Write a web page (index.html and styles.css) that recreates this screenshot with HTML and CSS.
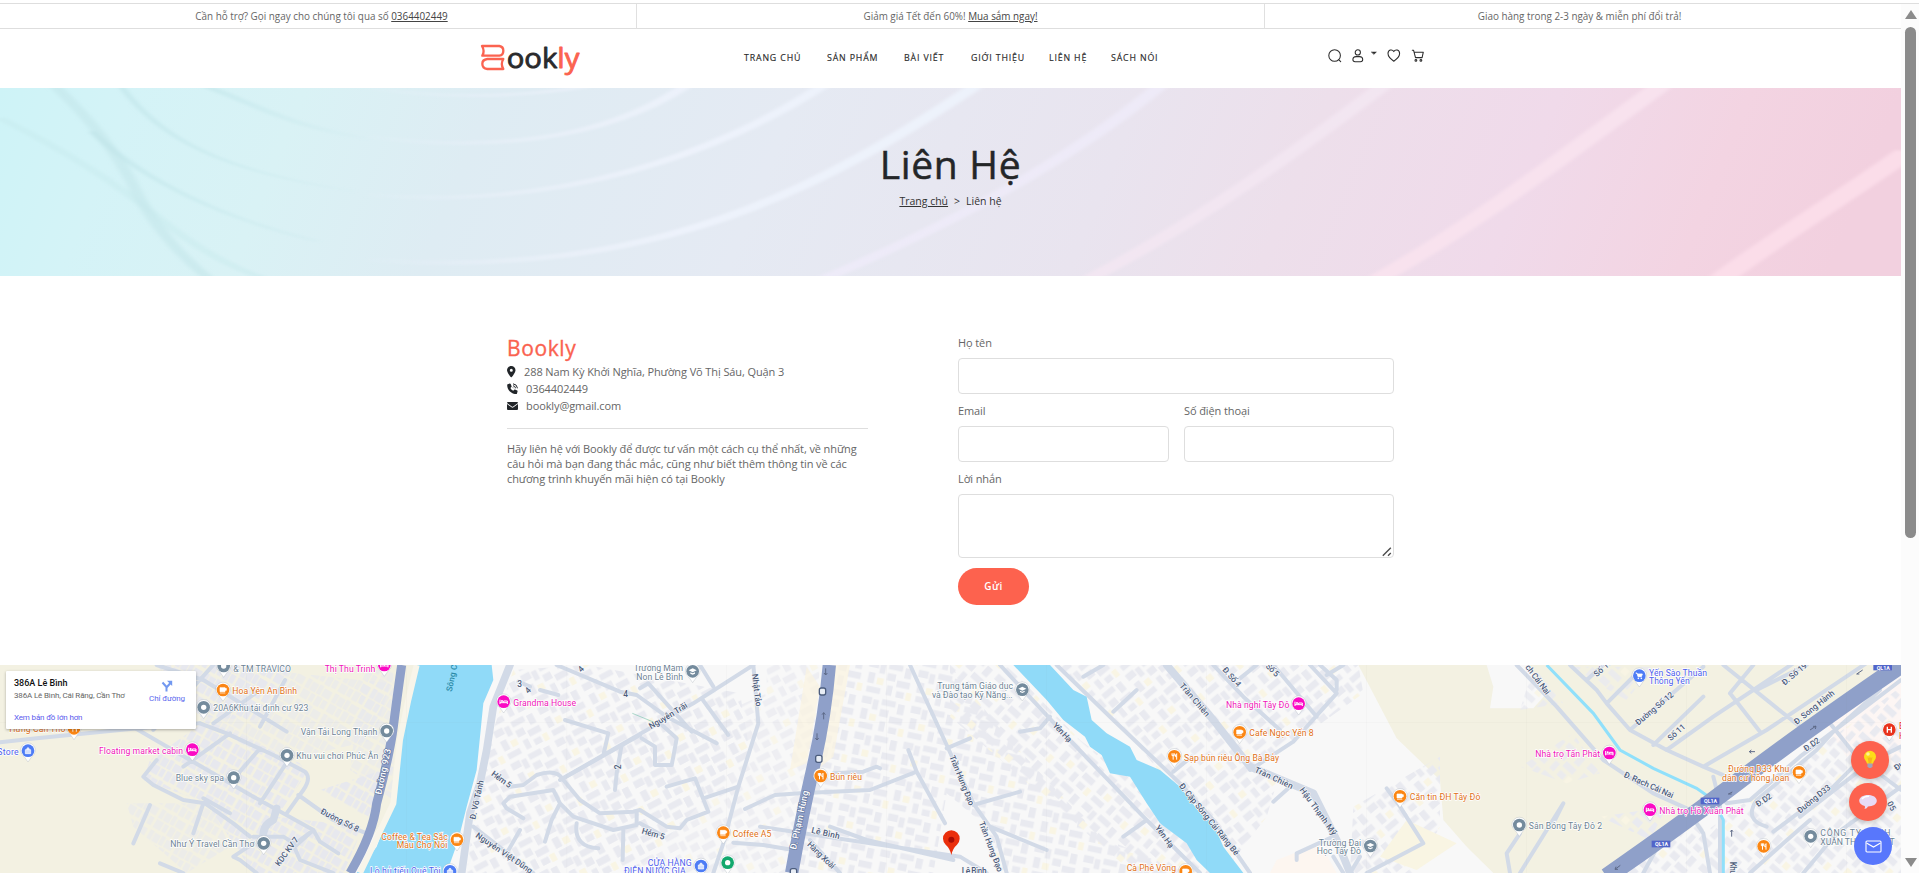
FILE: index.html
```html
<!DOCTYPE html>
<html lang="vi">
<head>
<meta charset="utf-8">
<title>Liên Hệ - Bookly</title>
<link rel="stylesheet" href="styles.css">
</head>
<body>
<div class="window">
<div class="page">
  <div class="topbar">
    <div class="topbar-cell"><span class="t1">Cần hỗ trợ? Gọi ngay cho chúng tôi qua số <a href="#">0364402449</a></span></div>
    <div class="topbar-cell"><span class="t2">Giảm giá Tết đến 60%! <a href="#">Mua sắm ngay!</a></span></div>
    <div class="topbar-cell"><span class="t3">Giao hàng trong 2-3 ngày &amp; miễn phí đổi trả!</span></div>
  </div>

  <header class="header">
    <svg class="logo" viewBox="0 0 306 96" width="102" height="32">
      <g fill="none" stroke="#fb6350" stroke-width="7" stroke-linejoin="round" stroke-linecap="round">
        <path d="M6 9H58Q70 11 70 23Q70 36 58 38H7Q15 24 6 9Z"/>
        <path d="M70 48H22Q7 50 7 62Q7 76 22 78H70Q61 63 70 48Z"/>
      </g>
      <text class="logo-text" x="80" y="76" textLength="218" lengthAdjust="spacingAndGlyphs">ook<tspan class="logo-accent">ly</tspan></text>
    </svg>
    <nav class="nav">
      <a class="n1">TRANG CHỦ</a><a class="n2">SẢN PHẨM</a><a class="n3">BÀI VIẾT</a><a class="n4">GIỚI THIỆU</a><a class="n5">LIÊN HỆ</a><a class="n6">SÁCH NÓI</a>
    </nav>
    <svg class="tools" viewBox="0 0 100 16" width="100" height="16" fill="none" stroke="#2b2b2b" stroke-width="1.05" stroke-linecap="round" stroke-linejoin="round">
      <circle cx="6.600" cy="7.500" r="5.800"/><path d="M10.900 11.800l1.800 1.800"/>
      <circle cx="29.800" cy="4.400" r="2.600"/><path d="M28.100 8.600h3.400c2 0 3.200 1.300 3.200 3 0 1.300-1 2.100-2.200 2.100h-5.400c-1.200 0-2.200-.8-2.200-2.100 0-1.700 1.200-3 3.200-3z"/>
      <path d="M43.600 4h4.800l-2.400 2.200z" fill="#2b2b2b" stroke-width=".5"/>
      <path d="M65.800 13.200c-4-2.600-5.800-5-5.800-7.600 0-3.800 4.200-4.900 5.800-2 1.600-2.900 5.800-1.800 5.800 2 0 2.600-1.800 5-5.800 7.600z"/>
      <path d="M84.300 2.300h1.300l1.900 7.300h6.600l1.200-5.400H86.300"/><circle cx="87.900" cy="12.400" r=".9"/><circle cx="92.900" cy="12.400" r=".9"/>
    </svg>
  </header>

  <section class="hero">
    <svg class="hero-art" viewBox="0 0 1554 564" preserveAspectRatio="none">
      <defs>
        <linearGradient id="sky" x1="0" y1="0" x2="1" y2="0.040">
          <stop offset="0" stop-color="#cef3f7"/><stop offset=".07" stop-color="#d4f3f7"/><stop offset=".16" stop-color="#d9f2f5"/>
          <stop offset=".26" stop-color="#deecf3"/><stop offset=".42" stop-color="#e5eaf3"/><stop offset=".6" stop-color="#e9e4ef"/>
          <stop offset=".7" stop-color="#eddfeb"/><stop offset=".82" stop-color="#f0daea"/><stop offset=".92" stop-color="#f3d4e2"/><stop offset="1" stop-color="#f2d0df"/>
        </linearGradient>
        <linearGradient id="fadeIn" gradientUnits="userSpaceOnUse" x1="290" y1="0" x2="560" y2="0">
          <stop offset="0" stop-color="#edf2fb" stop-opacity="0"/><stop offset="1" stop-color="#edf2fb"/>
        </linearGradient>
        <linearGradient id="fadeOut" gradientUnits="userSpaceOnUse" x1="60" y1="0" x2="310" y2="0">
          <stop offset="0" stop-color="#bfe4e8"/><stop offset="1" stop-color="#bfe4e8" stop-opacity="0"/>
        </linearGradient>
        <filter id="soft"><feGaussianBlur stdDeviation="2.200 3"/></filter>
      </defs>
      <rect width="1554" height="564" fill="url(#sky)"/>
      <g fill="none" filter="url(#soft)">
        <path d="M44 -10Q90 150 110 300T170 570" stroke="#c3e6ea" stroke-width="10" opacity=".55"/>
        <path d="M98 -10C130 150 180 250 290 310" stroke="url(#fadeOut)" stroke-width="5" opacity=".8"/>
        <path d="M0 90C60 200 100 300 130 390S190 540 215 570" stroke="#c6e9ec" stroke-width="9" opacity=".4"/>
        <path d="M75 130C120 290 190 400 260 460" stroke="url(#fadeOut)" stroke-width="6" opacity=".7"/>
        <path d="M165 -10C210 50 240 120 300 150" stroke="url(#fadeOut)" stroke-width="9" opacity=".9"/>
        <path d="M290 -5Q390 50 480 -5" stroke="url(#fadeIn)" stroke-width="9"/>
        <path d="M290 140Q370 185 440 150T560 -5" stroke="url(#fadeIn)" stroke-width="11"/>
        <path d="M300 320C460 370 590 190 672 -5" stroke="url(#fadeIn)" stroke-width="12"/>
        <path d="M300 515C540 580 680 280 797 -5" stroke="url(#fadeIn)" stroke-width="14"/>
        <path d="M675 570C790 390 880 200 948 -5" stroke="#eeebf8" stroke-width="14" opacity=".9"/>
        <path d="M892 570C980 400 1060 190 1130 -5" stroke="#f3e7f2" stroke-width="16" opacity=".9"/>
        <path d="M1128 570C1210 400 1280 200 1357 -5" stroke="#f8e2ee" stroke-width="20"/>
        <path d="M1408 570C1460 430 1510 320 1560 190" stroke="#fbdde9" stroke-width="23"/>
      </g>
    </svg>
    <div class="hero-copy">
      <h1>Liên Hệ</h1>
      <p class="crumbs"><a href="#">Trang chủ</a><span>&gt;</span><span>Liên hệ</span></p>
    </div>
  </section>

  <main class="contact">
    <section class="info">
      <h2>Bookly</h2>
      <ul>
        <li><svg width="9" height="12" viewBox="0 0 9 12"><path fill="#212529" fill-rule="evenodd" d="M4.300 0C6.700 0 8.500 1.800 8.500 4.200c0 2-2.800 5.800-3.700 6.900q-.5.5-1 0C2.900 10 0 6.200 0 4.200 0 1.800 1.900 0 4.300 0zm0 2.700a1.500 1.500 0 100 3 1.500 1.500 0 000-3z"/></svg><span class="i1">288 Nam Kỳ Khởi Nghĩa, Phường Võ Thị Sáu, Quận 3</span></li>
        <li><svg width="11" height="12" viewBox="0 0 11 12"><path fill="#212529" d="M.7 1.200L2.900.6q.6 0 .8.500l.9 2.100q.2.500-.2.900l-1 .8q.9 2 2.900 2.900l.8-1q.4-.4.9-.2l2.200.9q.5.300.4.800l-.6 2.200q-.2.500-.7.500C4.300 11 0 6.700.2 1.800q0-.5.5-.6z"/><path fill="none" stroke="#212529" d="M6 .8q4 .4 4.500 4.500M6 2.700q2.200.3 2.600 2.600M6 4.600l.6.600"/></svg><span class="i2">0364402449</span></li>
        <li><svg width="11" height="12" viewBox="0 0 11 12"><path fill="#212529" d="M1 2h9q1 0 1 1L6.200 6.500q-.7.500-1.400 0L0 3q0-1 1-1zM0 4l4.500 3.300q1 .7 2 0L11 4v5q0 1-1 1H1Q0 10 0 9z"/></svg><span class="i3">bookly@gmail.com</span></li>
      </ul>
      <hr>
      <p class="about"><span class="a1">Hãy liên hệ với Bookly để được tư vấn một cách cụ thể nhất, về những</span><br><span class="a2">câu hỏi mà bạn đang thắc mắc, cũng như biết thêm thông tin về các</span><br><span class="a3">chương trình khuyến mãi hiện có tại Bookly</span></p>
    </section>
    <form class="form">
      <label class="wide"><span>Họ tên</span><input type="text"></label>
      <label><span>Email</span><input type="text"></label>
      <label><span>Số điện thoại</span><input type="text"></label>
      <label class="wide"><span>Lời nhắn</span>
        <span class="area"><textarea></textarea><svg class="grip" width="10" height="10" viewBox="0 0 10 10"><path d="M.8 8.700L8.800.8M6 8.700l2.800-2.600" stroke="#4c4c4c" stroke-width="1.400"/></svg></span>
      </label>
      <button type="button">Gửi</button>
    </form>
  </main>

  <section class="map">
    <svg class="map-art" viewBox="0 15 5703 624" preserveAspectRatio="none">
      <defs>
        <pattern id="blocks" width="150" height="110" patternUnits="userSpaceOnUse">
          <g fill="#e9eaf0"><rect x="4" y="5" width="30" height="22"/><rect x="38" y="10" width="17" height="30"/><rect x="64" y="4" width="42" height="18"/><rect x="114" y="9" width="20" height="31"/><rect x="8" y="42" width="20" height="32"/><rect x="64" y="34" width="26" height="22"/><rect x="96" y="50" width="40" height="20"/><rect x="10" y="84" width="42" height="18"/><rect x="70" y="70" width="17" height="30"/><rect x="100" y="82" width="24" height="19"/></g>
          <rect x="36" y="54" width="20" height="20" fill="#f9f5e4"/><rect x="130" y="80" width="16" height="24" fill="#f9f5e4"/>
        </pattern>
        <pattern id="rows" width="92" height="70" patternUnits="userSpaceOnUse">
          <g fill="#e7e8ee"><rect x="2" y="3" width="14" height="30"/><rect x="19" y="5" width="20" height="28"/><rect x="42" y="2" width="13" height="30"/><rect x="59" y="6" width="26" height="25"/><rect x="3" y="37" width="24" height="28"/><rect x="31" y="38" width="14" height="25"/><rect x="50" y="36" width="18" height="30"/><rect x="72" y="38" width="15" height="26"/></g>
        </pattern>
        <pattern id="blocksA" href="#blocks" patternTransform="rotate(-28)"/>
        <pattern id="blocksB" href="#blocks" patternTransform="rotate(42)"/>
        <pattern id="blocksC" href="#blocks" patternTransform="rotate(12)"/>
        <pattern id="blocksD" href="#blocks" patternTransform="rotate(-40)"/>
        <pattern id="rowsA" href="#rows" patternTransform="rotate(30)"/>
        <g id="pin"><path d="M0 34L-12 17A22 22 0 1 1 12 17Z" fill="#fff" stroke="#9aa3ad" stroke-width="1.500" stroke-opacity=".6"/><circle r="19" fill="currentColor"/></g>
        <g id="p-dot"><use href="#pin"/><circle r="8" fill="#fff"/></g>
        <g id="p-cup"><use href="#pin"/><path d="M-9 -7H6V5H-9ZM6 -5h4v6H6M-9 9H7" fill="#fff" stroke="#fff" stroke-width="2"/></g>
        <g id="p-food"><use href="#pin"/><path d="M-7 -9v7h7v-7M-3.500 -9V10M7 10V-8q-4 2-4 9h4" fill="none" stroke="#fff" stroke-width="3"/></g>
        <g id="p-bed"><use href="#pin"/><path d="M-11 -6V7M-11 3H11V7M11 3V-2H0V3" fill="none" stroke="#fff" stroke-width="3"/><circle cx="-5" cy="-2" r="3" fill="#fff"/></g>
        <g id="p-bag"><use href="#pin"/><path d="M-8 -3H8V9H-8ZM-4 -3Q-4 -9 0 -9T4 -3" fill="#fff" fill-opacity=".75" stroke="#fff" stroke-width="2"/></g>
        <g id="p-cart"><use href="#pin"/><path d="M-11 -8h4l3 11h10l3-8H-6" fill="#fff" stroke="#fff" stroke-width="2.500"/><circle cx="-3" cy="8" r="2.500" fill="#fff"/><circle cx="6" cy="8" r="2.500" fill="#fff"/></g>
        <g id="p-edu"><use href="#pin"/><path d="M-12 -3L0 -9 12 -3 0 3ZM-7 3V7L0 10 7 7V3L0 6Z" fill="#fff"/></g>
      </defs>

      <!-- land -->
      <rect y="15" width="5703" height="624" fill="#f8f8f8"/>
      <path d="M0 15H1300L1200 400 1050 639H0Z" fill="#f3f1e2"/>
      <path d="M4075 15L4190 235 4320 360 4330 480 4400 560 4480 639H4860L5140 430 5703 15Z" fill="#f3f1e2"/>
      <path d="M4460 15H4580L4640 100 4600 145 4470 145 4480 80ZM4320 520L4400 560 4460 639H4320Z" fill="#f8f8f8"/>
      <path d="M5160 440L5703 30V639H4900Q5160 560 5160 440Z" fill="#f8f8f8"/>
      <path d="M5480 200L5703 50V330L5610 260 5540 290Z" fill="#fdf6f4"/>

      <!-- building blocks -->
      <path d="M470 15H880L760 180 600 170Z" fill="url(#rowsA)"/>
      <path d="M450 300L620 180 900 310 920 340 830 470 1090 500 1030 639H760L620 430 430 360ZM960 390L1180 320 1110 480Z" fill="url(#rowsA)"/>
      <path d="M600 180L700 20 1170 70 1120 240 860 300Z" fill="url(#rowsA)" opacity=".6"/>
      <path d="M1090 30H1180V420L1050 330Z" fill="url(#rowsA)" opacity=".6"/>
      <path d="M380 430L630 430 690 560 560 639 400 500Z" fill="url(#rowsA)" opacity=".55"/>
      <path d="M1540 30L1760 15 2220 100 2250 280 1900 639H1400L1440 330Z" fill="url(#blocksA)"/>
      <path d="M1850 300L2300 100V15H2460L2430 400 2370 639H1560Z" fill="url(#blocksA)" opacity=".7"/>
      <path d="M2500 15H2850L3010 220 3300 530 3560 639H3000L2960 500 2840 400 2800 639H2390L2440 340Z" fill="url(#blocksC)"/>
      <path d="M3020 15L3240 240 3550 480 3640 639H3400L2850 170V15Z" fill="url(#blocksB)"/>
      <path d="M3170 15H4075L4090 100 3880 250 3720 340 3550 420 3350 180Z" fill="url(#blocksD)"/>
      <path d="M3540 370L3740 310 3830 370 3800 470 3700 600ZM4060 440L4320 290V500L4240 639H4050Z" fill="url(#blocksD)"/>
      <path d="M4560 320L4720 220 4800 340 4700 370ZM4600 20L4690 130 4560 150ZM4700 20H4960L4880 120Z" fill="url(#blocksB)" opacity=".8"/>
      <path d="M5150 490L5703 80V639H4960ZM4850 639L5080 450 5180 639Z" fill="url(#blocksB)"/>
      <path d="M4800 470L5000 440 4950 540Z" fill="url(#blocksB)"/>
      <path d="M2420 20L2460 80 2420 310 2370 330ZM2500 15H2550L2500 290 2450 330Z" fill="#fbf4df" opacity=".7"/>
      <path d="M4220 480L4370 550 4250 630 4140 590Z" fill="#f9f5e3"/>
      <path d="M3830 600L3960 550 4010 639H3810Z" fill="#fdf6f0"/>

      <!-- minor streets -->
      <g class="road">
        <path d="M0 247L110 235 390 207 600 190"/>
        <path d="M470 15L610 60 860 215M380 190L760 410 940 510 960 545 1015 580M600 190L680 220 820 285 915 335Q935 355 910 390L860 460M690 220L550 320M780 265L715 340M865 300L780 430M470 300L430 350 460 375 550 420 615 430 700 490 750 530M460 210L590 70 640 15M640 190L780 90M780 200L855 60M450 435L400 550M610 430L580 520M690 460L610 415M895 405L1000 480 1100 520M940 510L880 555 900 600 1000 639M760 530L850 530 890 555 940 510M760 550L700 590 720 600 770 639M480 610L550 639"/>
        <path class="lane" d="M830 445L820 480Q785 495 790 540"/>
        <path class="lane" d="M1530 15L1480 140 1460 270 1440 370 1410 460M1410 460L1385 639"/>
        <path d="M1670 15L1860 95 1910 105 2000 170 2150 250M1555 65L1590 80M1620 90L1675 105M1920 85L1945 70 2075 215M1695 180L1825 220 1810 285M2260 15L2080 130 1680 360M2100 15L2140 80M2105 115L2185 225M1865 255L1850 340 1845 390M1980 190L2030 235 2020 290 2015 315 1965 315 1965 260 1925 235"/>
        <path d="M1920 225L1690 355M1530 380L1570 375 1610 345Q1670 325 1690 360L1740 420 1800 460 1900 455 1920 450 2000 500 2040 505 2060 480 2125 455 2085 355 2000 380M2110 415L2215 380M1570 475L1520 445 1510 430 1530 410 1660 390 1680 430 1720 470 1840 510 1910 495 1910 455M1680 430L1655 480 1635 545M1730 490Q1720 560 1795 565M1870 510L1868 600M1920 490L1985 525M1560 510L1520 580"/>
        <path d="M2260 15L2275 190 2215 380 2170 550 2140 639M2235 447L2325 405 2400 400 2610 390 2750 335 2725 270M2500 340L2590 335 2630 320 2640 325M2750 335L2835 490M2730 15L2840 255 2920 430 2990 530 3020 639M2840 265L2910 235M2200 548L2290 555 2380 570M2920 435L3060 395M2970 500L3140 570"/>
        <path d="M3000 15L3200 230 3430 470 3560 600 3600 639M3170 15L3340 180 3540 370 3640 480 3750 639M3250 50L3310 15M3340 155L3410 90M3060 215L3120 205 3150 170M3370 530L3440 480M3520 335L3575 290"/>
        <path class="lane" d="M3500 15L3640 180 3750 320"/>
        <path class="lane" d="M3750 320L3940 400 4010 540 4050 639"/>
        <path d="M3640 15L3730 110 3840 210M3820 15L3950 170M3720 55L3770 15M3930 15L4010 100 3880 245 3750 330M3980 45L4030 15M4010 90L4010 60 3960 15M3820 425L3870 380M4160 385L4200 440 4270 550 4100 639M3890 600L3890 580 4000 530M4000 590L4030 639M4080 590L4050 639"/>
        <path d="M4550 15L4670 140 4740 220 4810 300 4960 400 5060 445 5110 520 5130 639M4710 15L4790 90 4820 130 4890 210 5000 270 5110 320 5180 350M4820 130L4920 30M4760 60L4810 15M4890 210L5110 20M5000 270L5140 170 5380 10M4960 255L5110 110M5190 100L5280 215M5110 320L5300 210 5703 -60M5170 15L5400 200M5270 90L5420 15M5190 100L5260 15"/>
        <path d="M5140 350L5150 390 5180 430 5250 420 5400 290 5703 60M5300 500Q5230 480 5270 420L5450 270 5500 215 5640 90M5320 515L5500 380 5560 320M5400 470L5620 300 5703 260M5160 430V639M5110 430L5000 510 4930 639M5410 639L5510 520 5703 380M5250 639L5350 550 5430 480M5490 190L5570 290 5703 390M4560 520L4520 580 4530 639M4660 490L4690 430 4560 639M4440 639"/>
        <path d="M2280 500L2880 590 2960 639M2490 500L2600 540 2860 600M2430 540L2520 639M1420 500L1600 639"/>
      </g>

      <!-- water -->
      <path d="M1250 15H1475L1480 60 1450 130 1443 200 1430 330 1400 440 1375 540 1340 639H1070L1130 560 1180 430 1200 240 1225 120Z" fill="#90daf8"/>
      <path d="M1250 15L1225 120 1200 240 1180 430 1080 639" fill="none" stroke="#f8f5ea" stroke-width="18"/>
      <path d="M3040 15H3150L3220 90 3260 110 3275 180 3320 220 3390 260 3410 300 3480 330 3540 380 3600 460 3640 490 3670 560 3730 639H3630L3590 600 3560 550 3480 490 3440 430 3390 350 3330 340 3305 285 3270 260 3255 230 3190 180 3140 120Z" fill="#90daf8"/>
      <path d="M4640 15L4780 160 4860 270 4960 325 5090 385 5140 420 5170 480V639" fill="none" stroke="#90e0fb" stroke-width="9"/>

      <!-- highways -->
      <g fill="none" stroke="#8fa0c9">
        <path d="M1205 15Q1190 120 1180 200T1130 430Q1120 520 1050 639" stroke-width="27"/>
        <path d="M2488 15Q2475 170 2440 320T2375 639" stroke-width="40"/>
        <path d="M4820 650Q5050 490 5220 360T5703 15" stroke-width="52"/>
      </g>
      <path d="M0 187H5703M739 15V639M1219 15V639M1700 15V639M2179 15V639M2659 15V639M3139 15V639M3619 15V639M4099 15V639M4579 15V639M5059 15V639M5539 15V639" stroke="#999" stroke-opacity=".12"/>

      <!-- street names -->
      <g class="street">
        <text transform="translate(1355 96) rotate(-78)" class="river" textLength="82">Sông C</text>
        <text transform="translate(960 460) rotate(27)" textLength="125">Đường Số 8</text>
        <text transform="translate(838 620) rotate(-54)" textLength="100">KDC KV 7</text>
        <text transform="translate(1426 480) rotate(-78)" textLength="120">Đ. Võ Tánh</text>
        <text transform="translate(1425 530) rotate(34)" textLength="200">Nguyễn Việt Dũng</text>
        <text transform="translate(1472 345) rotate(36)" textLength="68">Hẻm 5</text>
        <text transform="translate(1924 520) rotate(16)" textLength="70">Hẻm 5</text>
        <text transform="translate(1953 208) rotate(-31)" textLength="130">Nguyễn Trãi</text>
        <text transform="translate(2256 43) rotate(83)" textLength="98">Nhật Tảo</text>
        <text x="1870" y="110">4</text><text transform="translate(1744 38) rotate(-45)">4</text><text x="1552" y="80">3</text><text transform="translate(1585 102) rotate(-45)">4</text><text transform="translate(1864 328) rotate(-90)">2</text>
        <text transform="translate(2433 518) rotate(13)" textLength="86">Lê Bình</text>
        <text transform="translate(2420 555) rotate(44)" textLength="105">Hàng Xoài</text>
        <text transform="translate(2848 290) rotate(68)" textLength="160">Trần Hưng Đạo</text>
        <text transform="translate(2936 488) rotate(69)" textLength="160">Trần Hưng Đạo</text>
        <text x="2885" y="643" textLength="75">Lê Bình</text>
        <text transform="translate(3157 197) rotate(47)" textLength="70">Yên Hạ</text>
        <text transform="translate(3464 503) rotate(54)" textLength="78">Yên Hạ</text>
        <text transform="translate(3537 78) rotate(49)" textLength="124">Trần Chiên</text>
        <text transform="translate(3666 30) rotate(49)" textLength="70">Đ. Số 4</text>
        <text transform="translate(3796 20) rotate(45)" textLength="45">Số 5</text>
        <text transform="translate(3762 335) rotate(25)" textLength="124">Trần Chiên</text>
        <text transform="translate(3898 390) rotate(54)" textLength="170">Hậu Thạnh Mỹ</text>
        <text transform="translate(3536 378) rotate(51)" textLength="270">Đ. Cặp Sông Cái Răng Bé</text>
        <text transform="translate(4575 22) rotate(53)" textLength="105">ch Cái Nai</text>
        <text transform="translate(4790 52) rotate(-42)" textLength="65">Số 13</text>
        <text transform="translate(4915 197) rotate(-40)" textLength="140">Đường Số 12</text>
        <text transform="translate(5012 244) rotate(-42)" textLength="62">Số 11</text>
        <text transform="translate(4870 350) rotate(24)" textLength="160">Đ. Rạch Cái Nai</text>
        <text transform="translate(5354 77) rotate(-40)" textLength="90">Đ. Số 19</text>
        <text transform="translate(5390 195) rotate(-39)" textLength="148">Đ. Song Hành</text>
        <text transform="translate(5418 275) rotate(-34)" textLength="52">Đ. D2</text>
        <text transform="translate(5274 442) rotate(-34)" textLength="52">Đ. D2</text>
        <text transform="translate(5400 461) rotate(-39)" textLength="120">Đường D33</text>
        <text transform="translate(5190 605) rotate(90)" textLength="80">Khu vực</text>
        <text transform="translate(5690 333) rotate(-38)">Đườ</text>
        <text transform="translate(5660 430) rotate(60)">05</text>
      </g>
      <g class="highway">
        <text transform="translate(1144 405) rotate(-78)" textLength="140">Đường 923</text>
        <text transform="translate(2388 570) rotate(-78)" textLength="180">Đ. Phạm Hùng</text>
      </g>
      <g class="shield"><rect x="5102" y="413" width="56" height="20"/><rect x="4955" y="542" width="56" height="20"/><rect x="5620" y="13" width="56" height="18"/>
        <text x="5112" y="430">QL1A</text><text x="4965" y="559">QL1A</text><text x="5630" y="29">QL1A</text></g>
      <g fill="none" stroke="#5d6987" stroke-width="3">
        <path d="M2477 25v20m-5-6l5 6 5-6M2471 178v-20m-5 6l5-6 5 6M2451 220v20m-5-6l5 6 5-6M4845 628l16-12m-16 12h9m-9 0l3-8M5265 275l-17 0m6-5l-6 5 6 5M5195 402l-10 0 12-6M5430 210l18-12m-9 1h9l-2 8M5570 42l18-12m-18 12h8M5195 530v-20m-4 5l4-5 4 5"/>
      </g>
      <g fill="#e8edf5" stroke="#4c5d7d" stroke-width="4"><rect x="2458" y="84" width="19" height="21" rx="6"/><rect x="2447" y="286" width="19" height="21" rx="6"/><rect x="2371" y="626" width="19" height="21" rx="6"/></g>
      <path d="M1897 160L1960 186" stroke="#81c6b0" stroke-width="2"/>

      <!-- places -->
      <g class="place gray">
        <use href="#p-dot" x="671" y="18"/><text x="700" y="36" textLength="173">&amp; TM TRAVICO</text>
        <use href="#p-dot" x="611" y="142"/><text x="640" y="153" textLength="285">20A6Khu tái định cư 923</text>
        <use href="#p-dot" x="1160" y="213"/><text x="902" y="224" textLength="230">Vận Tải Long Thạnh</text>
        <use href="#p-dot" x="861" y="286"/><text x="889" y="298" textLength="246">Khu vui chơi Phúc Ân</text>
        <use href="#p-dot" x="701" y="353"/><text x="527" y="364" textLength="145">Blue sky spa</text>
        <use href="#p-dot" x="791" y="550"/><text x="511" y="560" textLength="252">Như Ý Travel Cần Thơ</text>
        <use href="#p-edu" x="2078" y="34"/><text x="1901" y="34" textLength="148">Trường Mầm</text><text x="1909" y="60" textLength="140">Non Lê Bình</text>
        <use href="#p-edu" x="3067" y="89"/><text x="2812" y="88" textLength="227">Trung tâm Giáo dục</text><text x="2796" y="114" textLength="242">và Đào tạo Kỹ Năng...</text>
        <use href="#p-edu" x="4111" y="558"/><text x="3956" y="557" textLength="127">Trường Đại</text><text x="3950" y="583" textLength="133">Học Tây Đô</text>
        <use href="#p-dot" x="4558" y="495"/><text x="4586" y="508" textLength="220">Sân Bóng Tây Đô 2</text>
        <use href="#p-dot" x="5432" y="529"/><text x="5461" y="528" textLength="210">CÔNG TY TNHH</text><text x="5461" y="554" textLength="223">XUÂN THỊNH PHÁT</text>
      </g>
      <g class="place orange">
        <use href="#p-cup" x="669" y="90"/><text x="697" y="103" textLength="194">Hoa Yên An Bình</text>
        <use href="#p-food" x="222" y="205"/><text x="28" y="217" textLength="168">Hưng Cần Thơ</text>
        <use href="#p-cup" x="1371" y="539"/><text x="1144" y="539" textLength="199">Coffee &amp; Tea Sắc</text><text x="1190" y="565" textLength="152">Màu Chợ Nổi</text>
        <use href="#p-food" x="2462" y="348"/><text x="2490" y="360" textLength="96">Bún riêu</text>
        <use href="#p-cup" x="2170" y="518"/><text x="2198" y="530" textLength="116">Coffee A5</text>
        <use href="#p-food" x="3523" y="289"/><text x="3552" y="302" textLength="285">Sạp bún riêu Ông Bà Bảy</text>
        <use href="#p-cup" x="3719" y="217"/><text x="3748" y="229" textLength="193">Cafe Ngọc Yến 8</text>
        <use href="#p-cup" x="4200" y="409"/><text x="4229" y="421" textLength="212">Căn tin ĐH Tây Đô</text>
        <use href="#p-cup" x="3557" y="634"/><text x="3380" y="634" textLength="148">Cà Phê Võng</text>
        <use href="#p-cup" x="5397" y="337"/><text x="5184" y="336" textLength="184">Đường D33 Khu</text><text x="5166" y="362" textLength="202">dân cư hồng loan</text>
        <use href="#p-food" x="5291" y="559"/>
      </g>
      <g class="place pink">
        <use href="#p-bed" x="1153" y="15"/><text x="974" y="35" textLength="152">Thị Thu Trinh</text>
        <use href="#p-bed" x="577" y="269"/><text x="297" y="281" textLength="252">Floating market cabin</text>
        <use href="#p-bed" x="1511" y="125"/><text x="1540" y="137" textLength="188">Grandma House</text>
        <use href="#p-bed" x="3896" y="131"/><text x="3678" y="144" textLength="190">Nhà nghỉ Tây Đô</text>
        <use href="#p-bed" x="4828" y="279"/><text x="4606" y="291" textLength="194">Nhà trọ Tấn Phát</text>
        <use href="#p-bed" x="4950" y="449"/><text x="4978" y="461" textLength="253">Nhà trọ Hồ Xuân Phát</text>
      </g>
      <g class="place blue">
        <use href="#p-bag" x="84" y="272"/><text x="-8" y="284" textLength="64">Store</text>
        <use href="#p-bag" x="1350" y="634"/><text x="1110" y="641" textLength="212">Lò hủ tiếu Quê Tôi</text>
        <use href="#p-bag" x="2103" y="618"/><text x="1943" y="617" textLength="132">CỬA HÀNG</text><text x="1872" y="641" textLength="185">ĐIỆN NƯỚC GIA</text>
        <use href="#p-cart" x="4918" y="47"/><text x="4947" y="47" textLength="174">Yến Sào Thuần</text><text x="4947" y="73" textLength="122">Thông Yến</text>
      </g>
      <g class="place red"><use href="#pin" x="5668" y="209"/><path d="M5662 200v18M5674 200v18M5662 209h12" stroke="#fff" stroke-width="4"/><text x="5697" y="208">B</text><text x="5697" y="236">H</text></g>
      <g class="place green"><use href="#p-dot" x="2183" y="608"/></g>
      <path d="M2854 585Q2850 565 2837 554A25 25 0 1 1 2871 554Q2858 565 2854 585Z" fill="#ea2f0c"/><circle cx="2854" cy="539" r="9" fill="#a90c03"/>
    </svg>
    <div class="place-card">
      <div class="place-main"><strong>386A Lê Bình</strong><span class="addr">386A Lê Bình, Cái Răng, Cần Thơ</span><a class="bigger">Xem bản đồ lớn hơn</a></div>
      <div class="directions"><svg width="12" height="12" viewBox="0 0 12 12"><path d="M5.500 11.500V7L1.500 2.500M5.500 7.500L9.500 3" fill="none" stroke="#7298f0" stroke-width="2"/><path d="M6 .8h5.200V6z" fill="#7298f0"/></svg><span>Chỉ đường</span></div>
    </div>
  </section>
</div>

<div class="scrollbar"><i class="up"></i><i class="thumb"></i><i class="down"></i></div>

<div class="fab bulb"><svg width="14" height="20" viewBox="0 0 14 20"><path d="M7 .8a6 6 0 016 6c0 3-2.500 4-3 7H4C3.500 10.800 1 9.800 1 6.800a6 6 0 016-6z" fill="#fddc18"/><path d="M4.500 7l1.500 1 1-1 1 1 1.500-1-1.200 6H5.700z" fill="#f5b919"/><circle cx="5" cy="4" r="1.800" fill="#fff394"/><path d="M4.500 13.500h5v3L8 18H6l-1.500-1.500z" fill="#a2a3b8"/></svg></div>
<div class="fab chat"><svg width="20" height="16" viewBox="0 0 20 16"><path d="M10 1c5 0 8.800 2.300 8.800 5.800S15 12.500 10 12.500q-.8 2-3.500 2.500.8-1.400.3-2.900C3.500 11.300 1.200 9.500 1.200 6.800 1.200 3.300 5 1 10 1z" fill="#e8daf5"/><path d="M4 5q2-2.800 7-2.800" stroke="#fff" stroke-width="1.500" fill="none"/></svg></div>
<div class="fab mail"><svg width="17" height="13" viewBox="0 0 17 13" fill="none" stroke="#fff" stroke-width="1.100"><rect x="1" y="1" width="15" height="11" rx="1"/><path d="M1.500 3l7 4 7-4"/></svg></div>
</div>
</body>
</html>
```
FILE: styles.css
```css
* { box-sizing: border-box; }
body { margin: 0; font-family: "Open Sans", "Noto Sans", sans-serif; font-weight: 400; font-size: 11px; color: #666; background: #fff; overflow: hidden; }
a { color: inherit; }
.window { position: relative; display: flex; width: 1919px; height: 873px; padding-top: 3px; overflow: hidden; }
.page { width: 1901px; display: flex; flex-direction: column; }

.topbar { display: grid; grid-template-columns: 637px 628px 1fr; width: 1919px; height: 26px; border-top: 1px solid #dedede; }
.topbar-cell { display: flex; align-items: center; justify-content: center; height: 25px; border-right: 1px solid #e0e0e0; border-bottom: 1px solid #dedede; font-size: 9.900px; white-space: nowrap; padding: 0 0 1px 7px; }
.topbar-cell:nth-child(2) { padding-left: 0; }
.topbar-cell:last-child { border-right: 0; margin-right: 18px; padding-left: 0; padding-right: 7px; }
.topbar a { color: #444; text-underline-offset: 1px; }

.header { display: grid; grid-template-columns: 264px 584px 100px; height: 59px; padding-left: 480px; flex: none; }
.logo { margin-top: 14px; overflow: visible; }
.logo-text { font-family: "Open Sans", sans-serif; font-weight: 400; font-size: 81px; fill: #2a2a2c; stroke: #2a2a2c; stroke-width: 2.500px; stroke-linejoin: round; }
.logo-accent { fill: #fb6350; stroke: #fb6350; }
.nav { display: flex; gap: 25px; padding-top: 22px; font-size: 8.800px; line-height: 14px; font-weight: 500; color: #2b2b2b; white-space: nowrap; letter-spacing: .85px; -webkit-text-stroke: .15px #2b2b2b; }
.nav a { flex: none; }
.n1 { width: 58px; } .n2 { width: 52px; } .n3 { width: 42px; } .n4 { width: 53px; } .n5 { width: 37px; } .n6 { width: 49px; }
.tools { margin-top: 19px; }

.hero { position: relative; height: 188px; flex: none; display: flex; justify-content: center; }
.hero-art { position: absolute; inset: 0; width: 100%; height: 100%; }
.hero-copy { position: relative; text-align: center; padding-top: 49px; }
h1 { margin: 0; font-size: 39px; line-height: 54px; font-weight: 500; color: #242628; letter-spacing: .7px; -webkit-text-stroke: .5px #242628; white-space: nowrap; }
.crumbs { margin: 1px 0 0; display: flex; gap: 6px; justify-content: center; line-height: 18px; font-size: 10.500px; color: #333; }

.contact { display: grid; grid-template-columns: 361px 436px; column-gap: 90px; padding: 58px 0 0 507px; height: 389px; flex: none; letter-spacing: -.1px; }
h2 { margin: 0; color: #fa624f; font-size: 21px; line-height: 28px; font-weight: 500; letter-spacing: .6px; -webkit-text-stroke: .35px #fa624f; }
.info ul { list-style: none; margin: 1px 0 0; padding: 0; }
.info li { display: flex; align-items: center; gap: 8px; height: 17px; white-space: nowrap; }
.info hr { border: 0; border-top: 1px solid #dedede; margin: 14px 0 12px; }
.about { margin: 0; line-height: 15px; white-space: nowrap; }
.form { display: grid; grid-template-columns: 211px 210px; column-gap: 15px; row-gap: 8px; align-content: start; }
.form label { display: flex; flex-direction: column; }
.form label > span:first-child { height: 24px; line-height: 18px; }
.form .wide { grid-column: 1 / 3; }
.form input, .form textarea { display: block; width: 100%; height: 36px; border: 1px solid #dedede; border-radius: 4px; background: #fff; margin: 0; resize: none; }
.form textarea { height: 64px; }
.area { position: relative; display: block; }
.grip { position: absolute; right: 2px; bottom: 1px; }
.form button { width: 71px; height: 37px; margin-top: 2px; border: 0; border-radius: 19px; background: #fd624e; color: #fff; font: 600 10px "Open Sans", sans-serif; letter-spacing: .4px; padding: 0 0 2px; }

.map { position: relative; height: 208px; flex: none; overflow: hidden; }
.map-art { display: block; width: 1901px; height: 208px; }
.map-art text { font-family: Roboto, sans-serif; }
.road { fill: none; stroke: #d2dae7; stroke-width: 12px; stroke-linejoin: round; stroke-linecap: round; }
.road .lane { stroke-width: 23px; }
.street { font-size: 25px; font-weight: 500; fill: #4d5c79; paint-order: stroke; stroke: #f6f7fa; stroke-width: 4px; }
.street .river { fill: #2c8ba8; stroke: none; }
.highway { font-size: 27px; font-weight: 500; fill: #fff; paint-order: stroke; stroke: #66789f; stroke-width: 4px; }
.shield { font-size: 16px; font-weight: 700; fill: #fff; }
.shield rect { fill: #5165c9; }
.place { font-size: 26px; font-weight: 400; }
.place text { fill: currentColor; stroke: #fff; stroke-width: 4px; paint-order: stroke; }
.place.gray { color: #748b9d; } .place.gray text { fill: #6d8394; }
.place.orange { color: #fb8613; } .place.orange text { fill: #df7015; }
.place.pink { color: #fa0bc4; } .place.pink text { fill: #f016b8; }
.place.blue { color: #4d7cf5; } .place.blue text { fill: #4e60ed; }
.place.red { color: #e8321b; }
.place.green { color: #12a86d; }
.place-card { position: absolute; left: 6px; top: 6px; width: 190px; height: 58px; padding: 6px 11px 0 8px; background: #fff; border-radius: 1px; box-shadow: 0 1px 3px rgba(0,0,0,.3); display: flex; justify-content: space-between; font-family: Roboto, sans-serif; white-space: nowrap; }
.place-main { display: flex; flex-direction: column; font-size: 8px; letter-spacing: -.15px; }
.place-main strong { font-size: 9px; line-height: 12px; font-weight: 500; color: #111; letter-spacing: 0; }
.addr { line-height: 13px; color: #666; }
.bigger { margin-top: 10px; line-height: 12px; color: #5b5bee; }
.directions { display: flex; flex-direction: column; align-items: center; padding-top: 3px; font-size: 8px; line-height: 10px; gap: 2px; color: #5b67ee; letter-spacing: -.1px; }

.scrollbar { position: absolute; left: 1901px; top: 4px; width: 18px; height: 869px; background: #fcfcfc; display: flex; flex-direction: column; align-items: center; padding: 6px 0 6px; }
.scrollbar i { flex: none; margin-left: 1px; }
.up { border: 6px solid transparent; border-top: 0; border-bottom: 9px solid #8b8b8b; }
.thumb { width: 11px; height: 511px; margin-top: 8px; border-radius: 6px; background: #8b8b8b; }
.down { margin-top: auto; border: 6px solid transparent; border-bottom: 0; border-top: 9px solid #8b8b8b; }
.fab { position: absolute; width: 38px; height: 38px; border-radius: 50%; background: #fd624e; display: flex; align-items: center; justify-content: center; box-shadow: 0 2px 5px rgba(0,0,0,.2); }
.bulb { left: 1851px; top: 741px; }
.chat { left: 1849px; top: 783px; }
.mail { left: 1854px; top: 827px; background: #5877fc; box-shadow: none; }
```
